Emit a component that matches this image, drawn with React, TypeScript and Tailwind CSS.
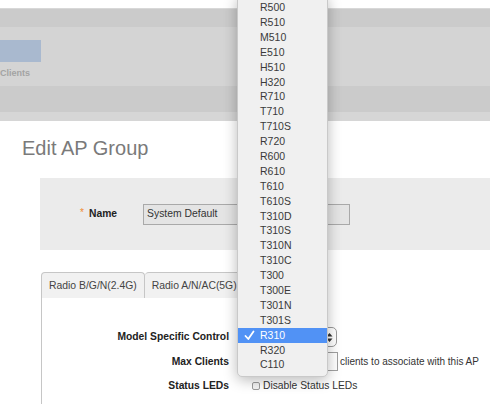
import { Fragment } from 'react';

const models = [
  'R500', 'R510', 'M510', 'E510', 'H510', 'H320', 'R710', 'T710', 'T710S', 'R720',
  'R600', 'R610', 'T610', 'T610S', 'T310D', 'T310S', 'T310N', 'T310C', 'T300', 'T300E',
  'T301N', 'T301S', 'R310', 'R320', 'C110',
];

const selected = 'R310';

function ModelMenu() {
  return (
    <div className="absolute left-[237px] top-[-5px] w-[91px] pt-[4.5px] pb-[3px] rounded-[5px] bg-[#f0f0f0] border border-[#c9c9c9] shadow-[0_3px_14px_rgba(0,0,0,0.28)]">
      {models.map((m) => (
        <div
          key={m}
          className={`relative h-[14.9px] flex items-center pl-[22px] text-[10.5px] font-medium ${
            m === selected ? 'bg-[#5192f5] text-white' : 'text-[#3a3a3a]'
          }`}
        >
          {m === selected && (
            <svg className="absolute left-[6px] top-[2px]" width="11" height="11" viewBox="0 0 11 11">
              <path d="M1.5 6 L4.3 9 L9.5 1.5" fill="none" stroke="white" strokeWidth="1.8" strokeLinecap="round" strokeLinejoin="round" />
            </svg>
          )}
          {m}
        </div>
      ))}
    </div>
  );
}

export default function App() {
  return (
    <div className="relative w-[490px] h-[404px] overflow-hidden bg-white font-['Liberation_Sans',Arial,sans-serif]">
      {/* page header (dimmed) */}
      <div className="h-2" />
      <div className="h-[19px] bg-[#cbcbcb] border-t border-[#d8d8d8]" />
      <div className="h-[59px] bg-[#d4d4d4] pt-[13px]">
        <div className="w-[41px] h-[22px] bg-[#a9b9cf]" />
        <div className="mt-[6px] text-[9px] leading-[10px] font-bold text-[#a3a3a3]">Clients</div>
      </div>
      <div className="h-[26px] bg-[#cbcbcb]" />
      <div className="h-[9px] bg-[#d6d6d6]" />

      <h1 className="mt-[15px] pl-[22px] text-[20px] leading-[24px] text-[#7a7a7a]">Edit AP Group</h1>

      <div className="mt-[18px] ml-[40px] h-[72px] bg-[#ebebeb] flex items-center pl-[40px]">
        <span className="text-[#f08a30] text-[10px] w-[9px] -mt-[3px]">*</span>
        <span className="w-[54px] text-[10.3px] font-bold text-[#222]">Name</span>
        <div className="w-[207px] h-[21px] bg-[#e4e4e4] border border-[#a9a9a9] flex items-center px-[3px] text-[10.4px] text-[#333]">
          System Default
        </div>
      </div>

      <div className="mt-[22px] ml-[41px] flex">
        <div className="h-[26px] px-[7px] flex items-center bg-[#f1f1f1] border border-b-0 border-[#c6c6c6] rounded-t-[4px] text-[10.4px] text-[#444]">
          Radio B/G/N(2.4G)
        </div>
        <div className="h-[26px] px-[7px] flex items-center bg-[#f1f1f1] border border-b-0 border-l-0 border-[#c6c6c6] rounded-t-[4px] text-[10.4px] text-[#444]">
          Radio A/N/AC(5G)
        </div>
      </div>

      <div className="ml-[41px] border-l border-[#c6c6c6] h-[120px] pt-[29px]">
        <div className="grid grid-cols-[187px_1fr] gap-x-[9px] items-center">
          {[
            ['Model Specific Control', 'select'],
            ['Max Clients', 'input'],
            ['Status LEDs', 'check'],
          ].map(([label, kind], i) => (
            <Fragment key={label}>
              <div className={`text-right text-[10.3px] font-bold text-[#222] ${i === 1 ? 'mt-[5px]' : ''} ${i === 2 ? 'mt-[7px]' : ''}`}>
                {label}
              </div>
              <div className={`flex items-center ${i === 1 ? 'mt-[5px]' : ''} ${i === 2 ? 'mt-[7px]' : ''}`}>
                {kind === 'select' && (
                  <div className="w-[99px] h-[20px] rounded-[5px] border border-[#9a9a9a] bg-white flex items-center justify-end pr-[3px]">
                    <svg width="7" height="11" viewBox="0 0 7 11">
                      <path d="M3.5 1 L6.5 4.5 L0.5 4.5 Z M3.5 10 L6.5 6.5 L0.5 6.5 Z" fill="#333" />
                    </svg>
                  </div>
                )}
                {kind === 'input' && (
                  <>
                    <div className="w-[100px] h-[19px] border border-[#a0a0a0] bg-white" />
                    <span className="ml-[2px] text-[10px] text-[#333]">clients to associate with this AP</span>
                  </>
                )}
                {kind === 'check' && (
                  <>
                    <div className="ml-[14px] w-[8px] h-[8px] border border-[#9c9c9c] rounded-[2px] bg-[#f4f4f4]" />
                    <span className="ml-[3px] text-[10.3px] leading-[12px] text-[#333]">Disable Status LEDs</span>
                  </>
                )}
              </div>
            </Fragment>
          ))}
        </div>
      </div>

      <ModelMenu />
    </div>
  );
}
